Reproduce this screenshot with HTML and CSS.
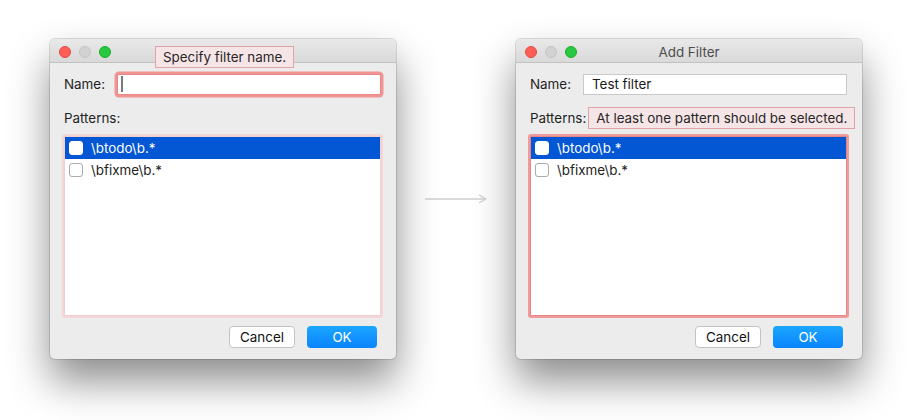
FILE: index.html
```html
<!DOCTYPE html>
<html lang="en">
<head>
  <meta charset="UTF-8">
  <title>Add Filter validation</title>
  <link rel="stylesheet" href="styles.css">
</head>
<body>

<div class="stage">

  <!-- BEFORE: empty name -->
  <div class="window">
    <div class="titlebar">
      <span class="light red"></span>
      <span class="light off"></span>
      <span class="light green"></span>
      <span class="title"></span>
    </div>
    <div class="tip tip-name">Specify filter name.</div>
    <div class="window-body">
      <div class="name-row">
        <label>Name:</label>
        <div class="field focused"><span class="caret"></span></div>
      </div>
      <div class="patterns-row">
        <label>Patterns:</label>
      </div>
      <div class="list soft">
        <div class="row selected"><span class="check"></span>\btodo\b.*</div>
        <div class="row"><span class="check"></span>\bfixme\b.*</div>
      </div>
      <div class="buttons">
        <button class="btn">Cancel</button>
        <button class="btn primary">OK</button>
      </div>
    </div>
  </div>

  <div class="arrow">
    <svg width="62" height="12" viewBox="0 0 62 12">
      <line x1="0" y1="6" x2="60" y2="6" stroke="#cfcfcf" stroke-width="1.6"/>
      <polyline points="54,2 61,6 54,10" fill="none" stroke="#cfcfcf" stroke-width="1.2"/>
    </svg>
  </div>

  <!-- AFTER: name filled, no pattern -->
  <div class="window">
    <div class="titlebar">
      <span class="light red"></span>
      <span class="light off"></span>
      <span class="light green"></span>
      <span class="title">Add Filter</span>
    </div>
    <div class="window-body">
      <div class="name-row">
        <label>Name:</label>
        <div class="field">Test filter</div>
      </div>
      <div class="patterns-row">
        <label>Patterns:</label>
        <div class="tip tip-inline">At least one pattern should be selected.</div>
      </div>
      <div class="list error">
        <div class="row selected"><span class="check"></span>\btodo\b.*</div>
        <div class="row"><span class="check"></span>\bfixme\b.*</div>
      </div>
      <div class="buttons">
        <button class="btn">Cancel</button>
        <button class="btn primary">OK</button>
      </div>
    </div>
  </div>

</div>

</body>
</html>
```

FILE: styles.css
```css
html,
body {
  height: 100%;
}

body {
  margin: 0;
  min-height: 420px;
  background: #fff;
  font-family: Inter, "Liberation Sans", sans-serif;
  font-size: 13.4px;
  color: #1f1f1f;
}

.stage {
  display: flex;
  align-items: center;
  gap: 29px;
  padding: 39px 0 0 50px;
}

/* Window chrome */
.window {
  position: relative;
  width: 346px;
  background: #ececec;
  border-radius: 5px;
  box-shadow: 0 0 0 1px rgba(0,0,0,0.13), 0 22px 40px rgba(0,0,0,0.45);
}

.titlebar {
  position: relative;
  height: 20px;
  padding: 3px 0 0 9px;
  display: flex;
  align-items: center;
  gap: 8px;
  background: linear-gradient(#e9e9e9, #d9d9d9);
  border-bottom: 1px solid #c2c2c2;
  border-radius: 5px 5px 0 0;
}

.light {
  width: 12px;
  height: 12px;
  border-radius: 50%;
  box-sizing: border-box;
}

.light.red { background: #fe5f57; border: 1px solid #e5483f; }
.light.off { background: #d2d2d2; border: 1px solid #c4c4c4; }
.light.green { background: #28c840; border: 1px solid #1dad2b; }

.title {
  position: absolute;
  left: 0;
  right: 0;
  top: 3px;
  line-height: 20px;
  text-align: center;
  color: #4d4d4d;
  pointer-events: none;
}

.window-body {
  padding: 10px 15px 11px 14px;
}

.name-row,
.patterns-row {
  display: flex;
  align-items: center;
  height: 22px;
}

.name-row label {
  width: 53px;
}

.patterns-row {
  margin-top: 12px;
}

.field {
  flex: 1;
  height: 21px;
  box-sizing: border-box;
  display: flex;
  align-items: center;
  padding-left: 8px;
  background: #fff;
  border: 1px solid #c9c9c9;
  color: #1a1a1a;
}

.field.focused {
  border-color: #e98585;
  box-shadow: 0 0 0 2.5px #f09494;
  border-radius: 2px;
  padding-left: 3px;
}

.caret {
  width: 2px;
  height: 16px;
  background: #7a7a7a;
}

/* Validation tooltips */
.tip {
  background: #f6e5e6;
  border: 1px solid #e0a3a8;
  color: #262626;
  padding: 0 7px;
  height: 22px;
  box-sizing: border-box;
  display: flex;
  align-items: center;
  white-space: nowrap;
}

.tip-name {
  position: absolute;
  left: 105px;
  top: 7px;
  z-index: 2;
}

.tip-inline {
  margin-left: 2px;
}

/* Pattern list */
.list {
  margin-top: 7px;
  height: 178px;
  background: #fff;
  border: 1px solid #c9c9c9;
}

.list.soft {
  border-color: #f1cfcf;
  box-shadow: 0 0 0 2px #f5d6d6;
  border-radius: 1px;
}

.list.error {
  border-color: #e98585;
  box-shadow: 0 0 0 2px #f09b9b;
  border-radius: 1px;
}

.row {
  display: flex;
  align-items: center;
  gap: 8px;
  height: 22px;
  padding-left: 4px;
  color: #222;
}

.row.selected {
  background: #0356d4;
  color: #fff;
}

.check {
  width: 14px;
  height: 14px;
  box-sizing: border-box;
  background: #fff;
  border: 1px solid #ababab;
  border-radius: 3px;
}

.row.selected .check {
  border-color: #fff;
}

/* Buttons */
.buttons {
  display: flex;
  justify-content: flex-end;
  gap: 12px;
  margin-top: 10px;
  padding-right: 4px;
}

.btn {
  height: 22px;
  font-family: inherit;
  font-size: 13.4px;
  border-radius: 4px;
  border: 1px solid #c3c3c3;
  background: #fff;
  color: #111;
  padding: 0;
  width: 66px;
}

.btn.primary {
  width: 70px;
  border: none;
  color: #fff;
  background: linear-gradient(#1ba6ff, #0a84ff);
}

.arrow {
  display: flex;
}
```
